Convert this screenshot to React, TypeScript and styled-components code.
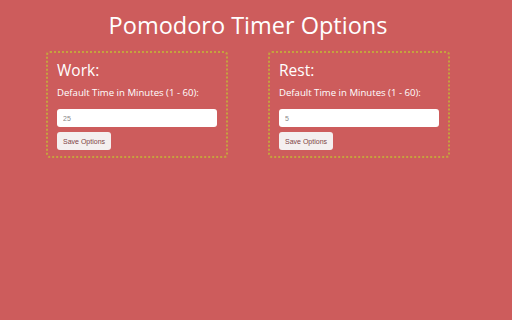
import React from 'react';
import styled, { createGlobalStyle } from 'styled-components';

const GlobalStyle = createGlobalStyle`
  html, body {
    margin: 0;
    padding: 0;
    background: #cd5c5c;
  }
  body {
    font-family: "Open Sans", "Noto Sans", sans-serif;
    color: #fff;
  }
`;

const Page = styled.div`
  width: 496px;
  height: 320px;
  box-sizing: border-box;
  padding-top: 9px;
`;

const Title = styled.h1`
  margin: 0;
  text-align: center;
  font-weight: 400;
  font-size: 23.5px;
  line-height: 32px;
`;

const Row = styled.div`
  display: flex;
  justify-content: center;
  gap: 40px;
  margin-top: 10px;
`;

const Panel = styled.section`
  width: 182px;
  height: 107px;
  box-sizing: border-box;
  border: 2px dotted #c6a23e;
  border-radius: 4px;
  padding: 6px 9px 0 9px;
`;

const Heading = styled.h2`
  margin: 0;
  font-weight: 400;
  font-size: 15.5px;
  line-height: 22px;
`;

const Label = styled.label`
  display: block;
  margin-top: 5px;
  font-size: 9.6px;
  line-height: 14px;
`;

const Input = styled.input`
  display: block;
  margin-top: 9px;
  width: 160px;
  height: 18px;
  box-sizing: border-box;
  border: none;
  border-radius: 3px;
  background: #fff;
  padding: 0 6px;
  font-family: "Liberation Sans", Arial, sans-serif;
  font-size: 7px;
  color: #888;
  outline: none;
`;

const Button = styled.button`
  display: block;
  margin-top: 5px;
  height: 18px;
  padding: 0 6px;
  border: none;
  border-radius: 3px;
  background: #f4efef;
  color: #7d4444;
  font-family: "Liberation Sans", Arial, sans-serif;
  font-size: 7px;
  font-weight: 400;
`;

const Options: React.FC<{ name: string; value: string }> = ({ name, value }) => (
  <Panel>
    <Heading>{name}:</Heading>
    <Label>Default Time in Minutes (1 - 60):</Label>
    <Input defaultValue={value} />
    <Button>Save Options</Button>
  </Panel>
);

export default function App() {
  return (
    <Page>
      <GlobalStyle />
      <Title>Pomodoro Timer Options</Title>
      <Row>
        <Options name="Work" value="25" />
        <Options name="Rest" value="5" />
      </Row>
    </Page>
  );
}
